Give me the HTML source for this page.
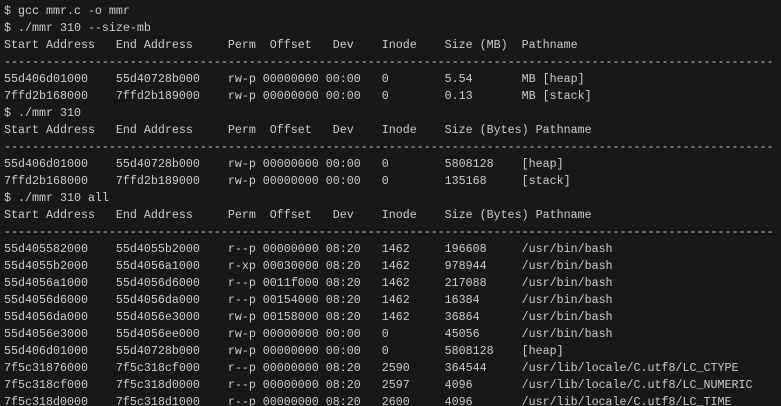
<!DOCTYPE html>
<html><head><meta charset="utf-8"><style>
html,body{margin:0;padding:0;background:#181818;width:781px;height:406px;overflow:hidden;position:relative}
pre{margin:0;position:absolute;left:4px;top:-14px;width:777px;height:420px;overflow:hidden;font-family:"Liberation Mono",monospace;font-size:11.67px;line-height:17px;color:#cccccc;white-space:pre}
</style></head><body><pre>$ 
$ gcc mmr.c -o mmr
$ ./mmr 310 --size-mb
Start Address   End Address     Perm  Offset   Dev    Inode    Size (MB)  Pathname
--------------------------------------------------------------------------------------------------------------
55d406d01000    55d40728b000    rw-p 00000000 00:00   0        5.54       MB [heap]
7ffd2b168000    7ffd2b189000    rw-p 00000000 00:00   0        0.13       MB [stack]
$ ./mmr 310
Start Address   End Address     Perm  Offset   Dev    Inode    Size (Bytes) Pathname
--------------------------------------------------------------------------------------------------------------
55d406d01000    55d40728b000    rw-p 00000000 00:00   0        5808128    [heap]
7ffd2b168000    7ffd2b189000    rw-p 00000000 00:00   0        135168     [stack]
$ ./mmr 310 all
Start Address   End Address     Perm  Offset   Dev    Inode    Size (Bytes) Pathname
--------------------------------------------------------------------------------------------------------------
55d405582000    55d4055b2000    r--p 00000000 08:20   1462     196608     /usr/bin/bash
55d4055b2000    55d4056a1000    r-xp 00030000 08:20   1462     978944     /usr/bin/bash
55d4056a1000    55d4056d6000    r--p 0011f000 08:20   1462     217088     /usr/bin/bash
55d4056d6000    55d4056da000    r--p 00154000 08:20   1462     16384      /usr/bin/bash
55d4056da000    55d4056e3000    rw-p 00158000 08:20   1462     36864      /usr/bin/bash
55d4056e3000    55d4056ee000    rw-p 00000000 00:00   0        45056      /usr/bin/bash
55d406d01000    55d40728b000    rw-p 00000000 00:00   0        5808128    [heap]
7f5c31876000    7f5c318cf000    r--p 00000000 08:20   2590     364544     /usr/lib/locale/C.utf8/LC_CTYPE
7f5c318cf000    7f5c318d0000    r--p 00000000 08:20   2597     4096       /usr/lib/locale/C.utf8/LC_NUMERIC
7f5c318d0000    7f5c318d1000    r--p 00000000 08:20   2600     4096       /usr/lib/locale/C.utf8/LC_TIME
</pre></body></html>
